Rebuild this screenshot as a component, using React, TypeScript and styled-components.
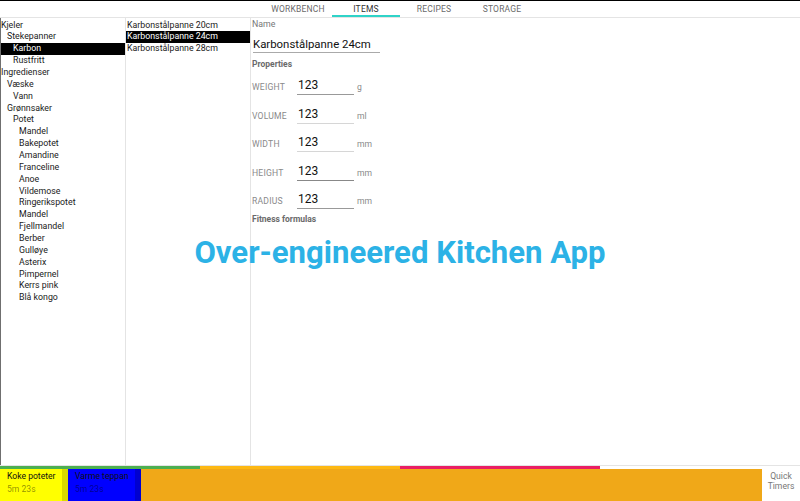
import React from "react";
import styled, { createGlobalStyle } from "styled-components";

const Global = createGlobalStyle`
  html, body { margin: 0; padding: 0; background: #fff; }
  body { font-family: Roboto, "Liberation Sans", sans-serif; }
  * { box-sizing: border-box; }
`;

const Shell = styled.div`
  position: relative;
  width: 800px;
  height: 501px;
  display: flex;
  flex-direction: column;
  border-top: 1px solid #000;
  overflow: hidden;
`;

const TabBar = styled.div`
  height: 17px;
  flex: none;
  display: flex;
  justify-content: center;
  border-bottom: 1px solid #e4e4e4;
`;

const Tab = styled.div<{ $active?: boolean }>`
  width: 68px;
  height: 16px;
  display: flex;
  align-items: center;
  justify-content: center;
  font-size: 8.5px;
  letter-spacing: 0.2px;
  color: ${(p) => (p.$active ? "#333" : "#6a6a6a")};
  border-bottom: 2px solid ${(p) => (p.$active ? "#2fd3c8" : "transparent")};
  padding-top: 1px;
`;

const Main = styled.div`
  flex: 1;
  display: flex;
  border-left: 1px solid #6f6f6f;
  min-height: 0;
`;

const ListPanel = styled.div`
  width: 125px;
  flex: none;
  border-right: 1px solid #e4e4e4;
  padding-top: 1.5px;
`;

const Row = styled.div<{ $level?: number; $selected?: boolean }>`
  height: 11.87px;
  line-height: 11.87px;
  font-size: 8.8px;
  white-space: nowrap;
  text-indent: ${(p) => (p.$level ?? 0) * 6}px;
  color: ${(p) => (p.$selected ? "#fff" : "#1a1a1a")};
  background-color: ${(p) => (p.$selected ? "#000" : "transparent")};
`;

const ItemRow = styled(Row)`
  text-indent: 1px;
`;

const Detail = styled.div`
  flex: 1;
  padding: 0 0 0 1px;
  display: flex;
  flex-direction: column;
`;

const FieldLabel = styled.div`
  font-size: 8.8px;
  color: #777;
  height: 12px;
  line-height: 12px;
`;

const NameInput = styled.div`
  margin: 7px 0 0 1px;
  width: 127px;
  font-size: 11.4px;
  color: #111;
  padding-bottom: 1px;
  border-bottom: 1px solid #aaa;
  line-height: 14px;
`;

const SectionTitle = styled.div<{ $top: number }>`
  margin-top: ${(p) => p.$top}px;
  font-size: 8.5px;
  font-weight: bold;
  color: #6a6a6a;
  height: 12px;
  line-height: 12px;
`;

const PropList = styled.div`
  margin-top: -1.5px;
  margin-bottom: 2px;
`;

const PropRow = styled.div`
  display: grid;
  grid-template-columns: 45px 57px auto;
  align-items: end;
  height: 28.6px;
  padding-bottom: 2px;
`;

const PropLabel = styled.div`
  font-size: 8.6px;
  color: #8a8a8a;
  letter-spacing: 0.2px;
  padding-bottom: 3px;
`;

const PropValue = styled.div<{ $line: string }>`
  font-size: 12px;
  color: #111;
  padding-left: 1px;
  padding-bottom: 2px;
  border-bottom: 1px solid ${(p) => p.$line};
  line-height: 13px;
`;

const PropUnit = styled.div`
  font-size: 8.6px;
  color: #8a8a8a;
  padding-left: 3px;
  padding-bottom: 3px;
`;

const Title = styled.div`
  position: absolute;
  left: 0;
  right: 0;
  top: 234px;
  text-align: center;
  font-size: 31.1px;
  font-weight: bold;
  color: #2cb2e6;
  line-height: 36px;
  pointer-events: none;
`;

const Progress = styled.div`
  flex: none;
  height: 4px;
  border-top: 1px solid #e4e4e4;
  display: flex;
`;

const Segment = styled.div<{ $color: string }>`
  width: 200px;
  height: 3px;
  background: ${(p) => p.$color};
`;

const TimerBar = styled.div`
  flex: none;
  height: 32px;
  display: flex;
`;

const TimerTrack = styled.div`
  flex: 1;
  background: #f0a818;
  display: flex;
`;

const TimerCard = styled.div<{ $bg: string; $strip: string }>`
  display: flex;
  background: ${(p) => p.$bg};
  &::after {
    content: "";
    width: 6.5px;
    background: ${(p) => p.$strip};
  }
`;

const TimerBody = styled.div`
  padding: 1px 6px 0 7px;
  font-size: 8.6px;
  line-height: 12.5px;
`;

const TimerName = styled.div`
  color: #111;
`;

const TimerTime = styled.div`
  color: rgba(0, 0, 0, 0.45);
`;

const QuickTimers = styled.div`
  width: 38px;
  flex: none;
  font-size: 8.6px;
  line-height: 10px;
  color: #777;
  text-align: center;
  padding-top: 2px;
`;

const tree: [string, number, boolean?][] = [
  ["Kjeler", 0],
  ["Stekepanner", 1],
  ["Karbon", 2, true],
  ["Rustfritt", 2],
  ["Ingredienser", 0],
  ["Væske", 1],
  ["Vann", 2],
  ["Grønnsaker", 1],
  ["Potet", 2],
  ["Mandel", 3],
  ["Bakepotet", 3],
  ["Amandine", 3],
  ["Franceline", 3],
  ["Anoe", 3],
  ["Vildemose", 3],
  ["Ringerikspotet", 3],
  ["Mandel", 3],
  ["Fjellmandel", 3],
  ["Berber", 3],
  ["Gulløye", 3],
  ["Asterix", 3],
  ["Pimpernel", 3],
  ["Kerrs pink", 3],
  ["Blå kongo", 3],
];

const props: [string, string, string][] = [
  ["Weight", "g", "#999"],
  ["Volume", "ml", "#d6d6d6"],
  ["Width", "mm", "#d6d6d6"],
  ["Height", "mm", "#888"],
  ["Radius", "mm", "#999"],
];

export default function App() {
  return (
    <>
      <Global />
      <Shell>
        <TabBar>
          <Tab>WORKBENCH</Tab>
          <Tab $active>ITEMS</Tab>
          <Tab>RECIPES</Tab>
          <Tab>STORAGE</Tab>
        </TabBar>
        <Main>
          <ListPanel>
            {tree.map(([t, l, s], i) => (
              <Row key={i} $level={l} $selected={s}>
                {t}
              </Row>
            ))}
          </ListPanel>
          <ListPanel>
            <ItemRow>Karbonstålpanne 20cm</ItemRow>
            <ItemRow $selected>Karbonstålpanne 24cm</ItemRow>
            <ItemRow>Karbonstålpanne 28cm</ItemRow>
          </ListPanel>
          <Detail>
            <FieldLabel>Name</FieldLabel>
            <NameInput>Karbonstålpanne 24cm</NameInput>
            <SectionTitle $top={5}>Properties</SectionTitle>
            <PropList>
              {props.map(([l, u, c]) => (
                <PropRow key={l}>
                  <PropLabel>{l.toUpperCase()}</PropLabel>
                  <PropValue $line={c}>123</PropValue>
                  <PropUnit>{u}</PropUnit>
                </PropRow>
              ))}
            </PropList>
            <SectionTitle $top={0}>Fitness formulas</SectionTitle>
          </Detail>
        </Main>
        <Progress>
          <Segment $color="#4caf50" />
          <Segment $color="#fdb813" />
          <Segment $color="#e91e63" />
        </Progress>
        <TimerBar>
          <TimerTrack>
            <TimerCard $bg="#ffff00" $strip="#d9d900">
              <TimerBody>
                <TimerName>Koke poteter</TimerName>
                <TimerTime>5m 23s</TimerTime>
              </TimerBody>
            </TimerCard>
            <TimerCard $bg="#0000ff" $strip="#0000d0">
              <TimerBody>
                <TimerName>Varme teppan</TimerName>
                <TimerTime>5m 23s</TimerTime>
              </TimerBody>
            </TimerCard>
          </TimerTrack>
          <QuickTimers>
            Quick
            <br />
            Timers
          </QuickTimers>
        </TimerBar>
        <Title>Over-engineered Kitchen App</Title>
      </Shell>
    </>
  );
}
